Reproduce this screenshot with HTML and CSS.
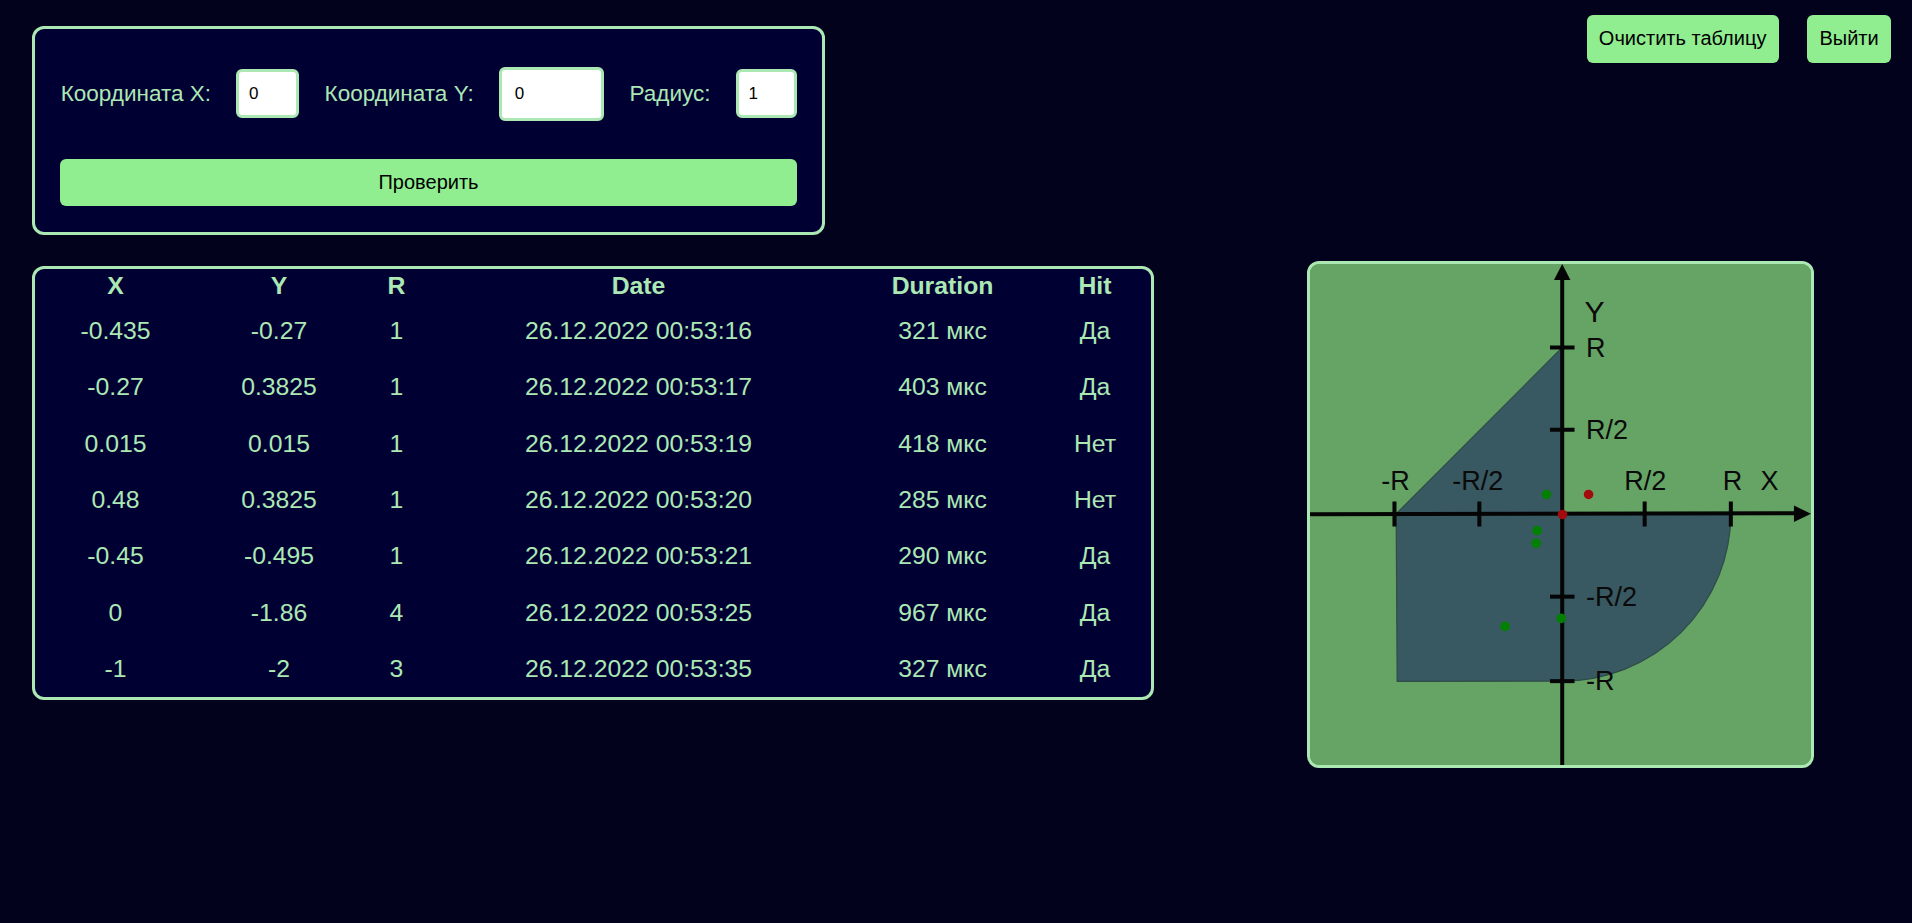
FILE: index.html
```html
<!DOCTYPE html>
<html lang="ru">
<head>
<meta charset="utf-8">
<title>Проверка попадания</title>
<link rel="stylesheet" href="styles.css">
</head>
<body>
<div class="page">
  <div class="top">
    <form class="card form-card">
      <div class="fields">
        <label class="lbl">Координата X:</label>
        <input class="inp inp-x" type="text" value="0">
        <label class="lbl">Координата Y:</label>
        <input class="inp inp-y" type="text" value="0">
        <label class="lbl">Радиус:</label>
        <input class="inp inp-r" type="text" value="1">
      </div>
      <button class="check" type="button">Проверить</button>
    </form>
    <div class="actions">
      <button class="btn" type="button">Очистить таблицу</button>
      <button class="btn" type="button">Выйти</button>
    </div>
  </div>
  <div class="bottom">
    <div class="card table-card">
      <table class="results">
        <colgroup>
          <col class="c-x"><col class="c-y"><col class="c-r"><col class="c-date"><col class="c-dur"><col class="c-hit">
        </colgroup>
        <thead>
          <tr><th>X</th><th>Y</th><th>R</th><th>Date</th><th>Duration</th><th>Hit</th></tr>
        </thead>
        <tbody>
          <tr><td>-0.435</td><td>-0.27</td><td>1</td><td>26.12.2022 00:53:16</td><td>321 мкс</td><td>Да</td></tr>
          <tr><td>-0.27</td><td>0.3825</td><td>1</td><td>26.12.2022 00:53:17</td><td>403 мкс</td><td>Да</td></tr>
          <tr><td>0.015</td><td>0.015</td><td>1</td><td>26.12.2022 00:53:19</td><td>418 мкс</td><td>Нет</td></tr>
          <tr><td>0.48</td><td>0.3825</td><td>1</td><td>26.12.2022 00:53:20</td><td>285 мкс</td><td>Нет</td></tr>
          <tr><td>-0.45</td><td>-0.495</td><td>1</td><td>26.12.2022 00:53:21</td><td>290 мкс</td><td>Да</td></tr>
          <tr><td>0</td><td>-1.86</td><td>4</td><td>26.12.2022 00:53:25</td><td>967 мкс</td><td>Да</td></tr>
          <tr><td>-1</td><td>-2</td><td>3</td><td>26.12.2022 00:53:35</td><td>327 мкс</td><td>Да</td></tr>
        </tbody>
      </table>
    </div>
    <div class="graph">
      <svg class="plot" width="501" height="501" viewBox="0 0 500 500" xmlns="http://www.w3.org/2000/svg">
        <rect x="0" y="0" width="500" height="500" fill="#66a466"/>
        <path d="M86 249.3 L251.7 83.3 L251.7 249.3 L420 249.3 A168.3 167 0 0 1 251.7 416.3 L87 416.5 Z" fill="#385862" stroke="#2e4c48" stroke-width="1.2"/>
        <g stroke="#050505" stroke-width="4" fill="none">
          <line x1="0" y1="249.8" x2="486" y2="248.8"/>
          <line x1="251.7" y1="14" x2="251.7" y2="500"/>
          <line x1="84.3" y1="237" x2="84.3" y2="262"/>
          <line x1="169" y1="237" x2="169" y2="262"/>
          <line x1="334" y1="237" x2="334" y2="262"/>
          <line x1="420" y1="237" x2="420" y2="262"/>
          <line x1="239.5" y1="83.3" x2="264" y2="83.3"/>
          <line x1="239.5" y1="165.3" x2="264" y2="165.3"/>
          <line x1="239.5" y1="332" x2="264" y2="332"/>
          <line x1="239.5" y1="416.3" x2="264" y2="416.3"/>
        </g>
        <polygon points="251.7,0 243.5,16 259.9,16" fill="#050505"/>
        <polygon points="500,249.3 483,241 483,257.6" fill="#050505"/>
        <g class="lbls" fill="#0a0a0a">
          <text class="big" x="274" y="57.7">Y</text>
          <text x="275.5" y="92.7">R</text>
          <text x="275.5" y="174.3">R/2</text>
          <text x="71" y="225.3">-R</text>
          <text x="142" y="225.3">-R/2</text>
          <text x="313.5" y="225.3">R/2</text>
          <text x="412" y="225.3">R</text>
          <text x="449.5" y="225.3">X</text>
          <text x="275.5" y="341">-R/2</text>
          <text x="275.5" y="425.3">-R</text>
        </g>
        <g>
          <circle cx="236" cy="230" r="4.8" fill="#028002"/>
          <circle cx="278" cy="230" r="4.8" fill="#a30c0c"/>
          <circle cx="252" cy="250" r="4.8" fill="#a30c0c"/>
          <circle cx="226.7" cy="266" r="4.8" fill="#028002"/>
          <circle cx="225.7" cy="278.7" r="4.8" fill="#028002"/>
          <circle cx="250.7" cy="353.7" r="4.8" fill="#028002"/>
          <circle cx="194.7" cy="361.7" r="4.8" fill="#028002"/>
        </g>
      </svg>
    </div>
  </div>
</div>
</body>
</html>
```

FILE: styles.css
```css
* { box-sizing: border-box; }

html, body {
  margin: 0;
  padding: 0;
  background: #02021c;
  font-family: "Liberation Sans", Arial, sans-serif;
}

.page {
  width: 1912px;
  min-height: 923px;
}

.top {
  display: flex;
  justify-content: space-between;
  align-items: flex-start;
}

.card {
  background: #000033;
  border: 3px solid #ace8b4;
  border-radius: 12px;
}

.form-card {
  margin: 26px 0 0 31.5px;
  width: 793px;
  height: 208.5px;
  padding: 38px 24.5px 0 25.5px;
  display: flex;
  flex-direction: column;
}

.fields {
  display: flex;
  align-items: center;
  height: 53.6px;
  padding-left: 0.7px;
}

.lbl {
  color: #ace8b4;
  font-size: 22.5px;
  margin-right: 25px;
  white-space: nowrap;
}

.inp {
  font-family: "Liberation Sans", Arial, sans-serif;
  font-size: 17px;
  color: #000;
  background: #fff;
  border: 3px solid #ace8b4;
  border-radius: 6px;
  outline: none;
  margin: 0 25.5px 0 0;
  padding: 0 0 0 10px;
}

.inp-x { width: 63px; height: 49.4px; }
.inp-y { width: 105.4px; height: 53.6px; padding-left: 13px; }
.inp-r { width: 61px; height: 49.4px; margin-right: 0; }

.check {
  margin-top: 38px;
  height: 47.4px;
  width: 100%;
  border: none;
  border-radius: 6px;
  background: #90ee90;
  color: #000;
  font-family: "Liberation Sans", Arial, sans-serif;
  font-size: 20px;
}

.actions {
  display: flex;
  gap: 28.5px;
  margin: 15px 21px 0 0;
}

.btn {
  background: #90ee90;
  color: #000;
  border: none;
  border-radius: 6px;
  font-family: "Liberation Sans", Arial, sans-serif;
  font-size: 20px;
  height: 47.7px;
  padding: 0 12.3px;
}

.bottom {
  display: flex;
  align-items: flex-start;
  gap: 153px;
  margin-top: 26px;
  padding-left: 32px;
}

.table-card {
  margin-top: 5.2px;
  width: 1122px;
  height: 434.5px;
  overflow: hidden;
}

.results {
  width: 100%;
  border-collapse: collapse;
  table-layout: fixed;
  color: #ace8b4;
  font-size: 24.75px;
}

.c-x { width: 161px; }
.c-y { width: 166px; }
.c-r { width: 69px; }
.c-date { width: 415px; }
.c-dur { width: 193px; }
.c-hit { width: 112px; }

.results th {
  height: 34px;
  padding: 0;
  font-weight: bold;
  text-align: center;
  vertical-align: middle;
}

.results td {
  height: 56.4px;
  padding: 0;
  text-align: center;
  vertical-align: middle;
}

.graph {
  width: 507px;
  height: 507px;
  border: 3px solid #ace8b4;
  border-radius: 12px;
  overflow: hidden;
  background: #66a466;
}

.plot {
  display: block;
}

.lbls text {
  font-family: "Liberation Sans", Arial, sans-serif;
  font-size: 27px;
}

.lbls .big {
  font-size: 30px;
}
```
